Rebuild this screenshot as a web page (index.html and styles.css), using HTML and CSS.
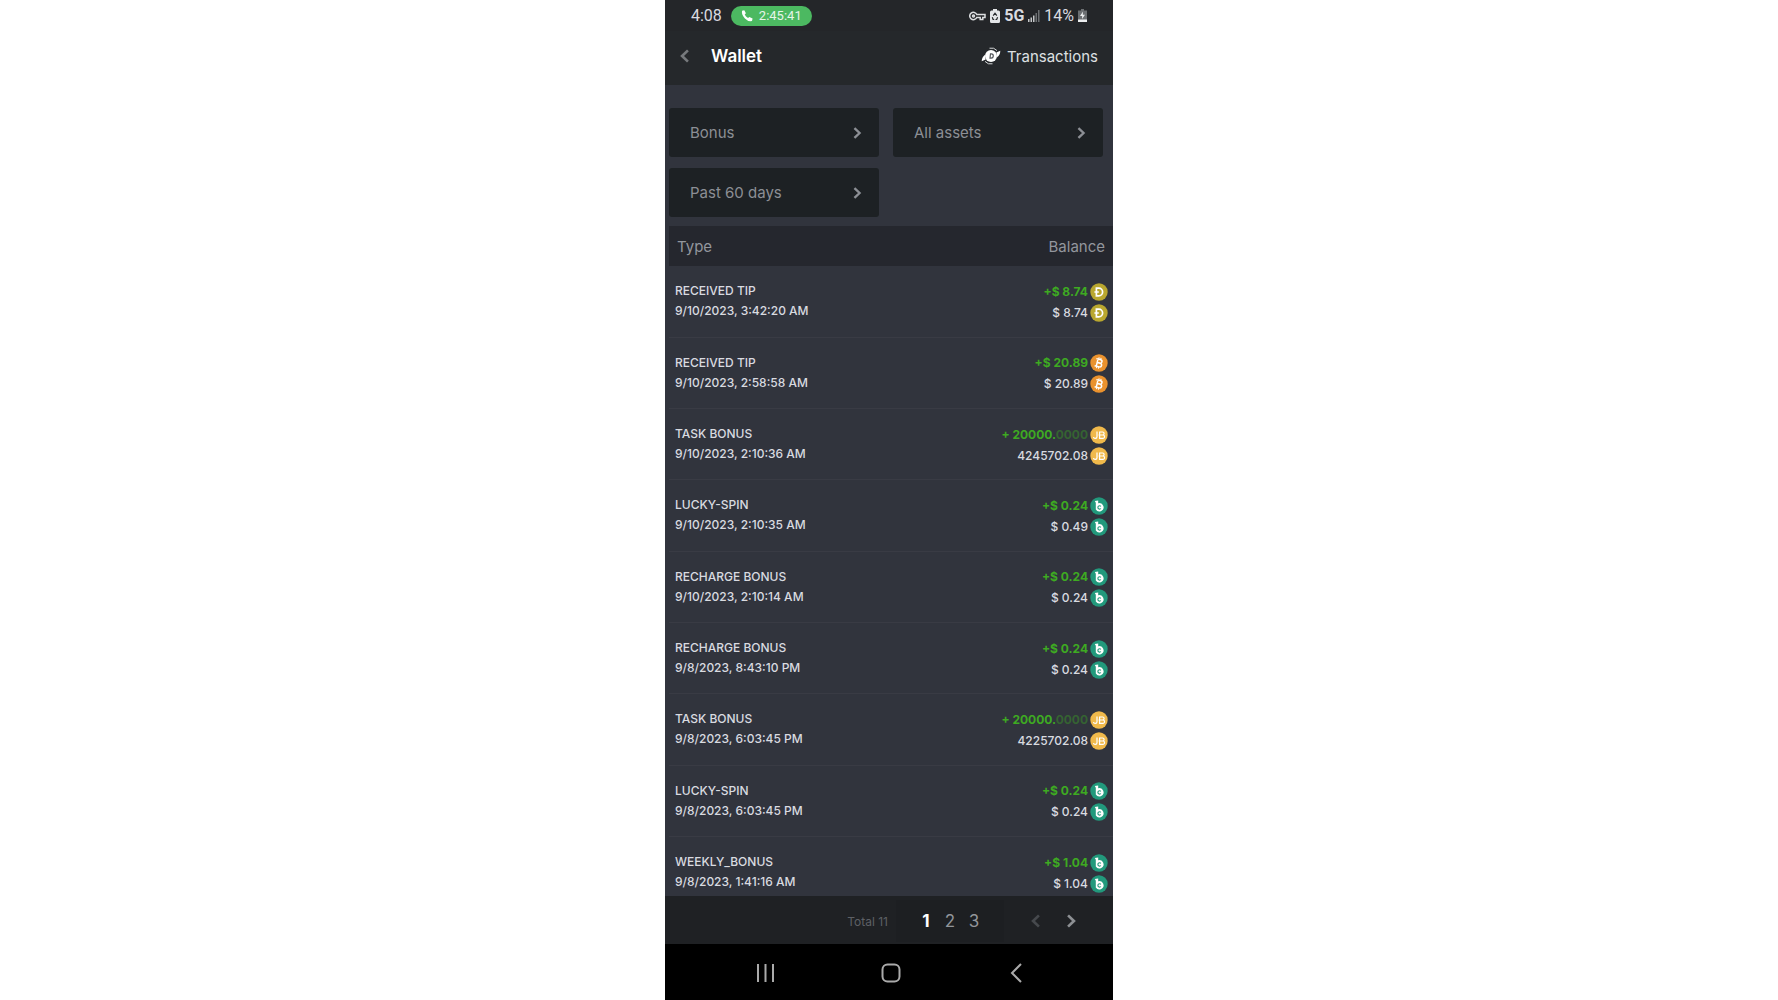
FILE: index.html
```html
<!DOCTYPE html>
<html lang="en">
<head>
  <meta charset="UTF-8">
  <meta name="viewport" content="width=device-width, initial-scale=1.0">
  <title>Wallet</title>
  <link rel="stylesheet" href="styles.css">
</head>
<body>

  <!-- shared icons -->
  <svg class="sprite" aria-hidden="true">
    <symbol id="right" viewBox="0 0 12 12"><path d="M3.8 1.8 8.2 6l-4.4 4.2" fill="none" stroke="currentColor" stroke-width="2"/></symbol>
    <symbol id="left" viewBox="0 0 12 12"><path d="M8.2 1.8 3.8 6l4.4 4.2" fill="none" stroke="currentColor" stroke-width="2"/></symbol>
    <symbol id="doge" viewBox="0 0 18 18">
      <circle cx="9" cy="9" r="8.7" fill="#b9a72f"/>
      <path d="M6.4 5.2h2.4a3.8 3.8 0 0 1 0 7.6H6.4zM4.4 9h4.4" fill="none" stroke="#fff" stroke-width="1.7"/>
    </symbol>
    <symbol id="btc" viewBox="0 0 18 18">
      <circle cx="9" cy="9" r="8.7" fill="#ea922e"/>
      <g transform="rotate(14 9 9)" fill="none" stroke="#fff" stroke-width="1.5">
        <path d="M5.4 5.4h4.4a1.7 1.7 0 0 1 0 3.5H7.2h3a1.9 1.9 0 0 1 0 3.8H5.4M7.1 5.4v7.3"/>
        <path d="M7.8 3.4v2M9.8 3.4v2M7.8 12.7v2M9.8 12.7v2" stroke-width="1.1"/>
      </g>
    </symbol>
    <symbol id="jb" viewBox="0 0 18 18">
      <circle cx="9" cy="9" r="8.7" fill="#f0b94b"/>
      <path d="M7 5.6v5.1q0 1.7-1.7 1.7T3.5 11M9.6 6h3a1.5 1.5 0 0 1 0 3h-3 3.3a1.6 1.6 0 0 1 0 3.3H9.6zM8.6 9h3" fill="none" stroke="#fff" stroke-width="1.2"/>
    </symbol>
    <symbol id="bc" viewBox="0 0 18 18">
      <circle cx="9" cy="9" r="8.7" fill="#22997c"/>
      <path d="M4.8 4 8.2 3.4v2.8a4.2 4.2 0 1 1-2.4 6.300V5.8z" fill="#fff"/>
      <path d="M10.900 9.300a1.700 1.700 0 1 0 0 2.200" fill="none" stroke="#22997c" stroke-width="1.100"/>
    </symbol>
  </svg>

  <div class="phone">

    <div class="status">
      <span class="time">4:08</span>
      <span class="call">
        <svg width="12" height="12" viewBox="0 0 12 12"><path d="M1 .8 3.3.2l1.6 3-1.2 1.3q1 2.1 3.3 3.6l1.4-1.2 3.2 1.6-.6 2.600q-3.600.800-7.100-2.700T1 .8z" fill="#fff"/></svg>
        2:45:41
      </span>
      <span class="signals">
        <svg width="17" height="12" viewBox="0 0 17 12" fill="none" stroke="#dcdee0" stroke-width="1.5">
          <path d="M7.8 4.5a3.7 3.7 0 1 0 0 3h3.4v2h2.6v-2H16v-3z"/><circle cx="4.5" cy="6" r="1"/>
        </svg>
        <svg width="10" height="14" viewBox="0 0 10 14">
          <path d="M3 0h4v1.5h1.5Q10 1.500 10 3v9.500Q10 14 8.500 14h-7Q0 14 0 12.500V3q0-1.500 1.500-1.500H3z" fill="#e4e6e8"/>
          <path d="m3.200 6.700 1.800-2.500 1.800 2.500M7.600 8.200l-.9 2.300H5.500M4.200 10.500H3.100l-.8-2.200" fill="none" stroke="#24272a" stroke-width="1.200"/>
        </svg>
        <b>5G</b>
        <svg width="12" height="12" viewBox="0 0 12 12">
          <path d="M0 9h1.500v3H0zM2.500 7.500H4V12H2.500zM5 5.500h1.500V12H5z" fill="#c4c6c8"/>
          <path d="M7.500 3H9v9H7.500zM10 0h1.500v12H10z" fill="#6d7073"/>
        </svg>
        <span class="percent">14%</span>
        <svg width="9" height="13" viewBox="0 0 9 13">
          <path d="M3 0h3v1.500h3V13H0V1.500h3z" fill="#6c6f72"/>
          <path d="M0 10.500h9V13H0zM5 2.500 2 7h2.200L4 10l3-4.300H4.800z" fill="#eceeef"/>
        </svg>
      </span>
    </div>

    <header class="topbar">
      <button class="back" aria-label="Back"><svg width="16" height="16"><use href="#left"/></svg></button>
      <h1>Wallet</h1>
      <a href="#" class="transactions">
        <svg width="20" height="18" viewBox="0 0 20 18">
          <circle cx="10" cy="9" r="6" fill="#fff"/>
          <path d="M9.5 6.800h.8a2 2 0 0 1-.3 4.300h-1z" fill="none" stroke="#55585c" stroke-width="1.200"/>
          <path d="M8.500 1.200a7.500 7.500 0 0 1 7.500 2.400M11.500 16.800A7.500 7.500 0 0 1 4 14.400" fill="none" stroke="#d5d7d9" stroke-width="1"/>
          <path d="m15.300 5.500 4-1.800q0 4-3.200 6.600 0-2.600-.8-4.800zM4.700 12.500l-4 1.800q0-4 3.200-6.600 0 2.600.8 4.800z" fill="#fff"/>
        </svg>
        Transactions
      </a>
    </header>

    <div class="filters">
      <div class="filter">
        <select aria-label="Type"><option>Bonus</option></select>
        <svg width="14" height="14"><use href="#right"/></svg>
      </div>
      <div class="filter">
        <select aria-label="Asset"><option>All assets</option></select>
        <svg width="14" height="14"><use href="#right"/></svg>
      </div>
      <div class="filter">
        <select aria-label="Period"><option>Past 60 days</option></select>
        <svg width="14" height="14"><use href="#right"/></svg>
      </div>
    </div>

    <main class="list">
      <table>
        <thead>
          <tr><th>Type</th><th>Balance</th></tr>
        </thead>
        <tbody>
          <tr>
            <td>RECEIVED TIP<br>9/10/2023, 3:42:20 AM</td>
            <td>
              <div class="amount plus">+$ 8.74 <svg><use href="#doge"/></svg></div>
              <div class="amount">$ 8.74 <svg><use href="#doge"/></svg></div>
            </td>
          </tr>
          <tr>
            <td>RECEIVED TIP<br>9/10/2023, 2:58:58 AM</td>
            <td>
              <div class="amount plus">+$ 20.89 <svg><use href="#btc"/></svg></div>
              <div class="amount">$ 20.89 <svg><use href="#btc"/></svg></div>
            </td>
          </tr>
          <tr>
            <td>TASK BONUS<br>9/10/2023, 2:10:36 AM</td>
            <td>
              <div class="amount plus"><span>+ 20000.<i>0000</i></span> <svg><use href="#jb"/></svg></div>
              <div class="amount">4245702.08 <svg><use href="#jb"/></svg></div>
            </td>
          </tr>
          <tr>
            <td>LUCKY-SPIN<br>9/10/2023, 2:10:35 AM</td>
            <td>
              <div class="amount plus">+$ 0.24 <svg><use href="#bc"/></svg></div>
              <div class="amount">$ 0.49 <svg><use href="#bc"/></svg></div>
            </td>
          </tr>
          <tr>
            <td>RECHARGE BONUS<br>9/10/2023, 2:10:14 AM</td>
            <td>
              <div class="amount plus">+$ 0.24 <svg><use href="#bc"/></svg></div>
              <div class="amount">$ 0.24 <svg><use href="#bc"/></svg></div>
            </td>
          </tr>
          <tr>
            <td>RECHARGE BONUS<br>9/8/2023, 8:43:10 PM</td>
            <td>
              <div class="amount plus">+$ 0.24 <svg><use href="#bc"/></svg></div>
              <div class="amount">$ 0.24 <svg><use href="#bc"/></svg></div>
            </td>
          </tr>
          <tr>
            <td>TASK BONUS<br>9/8/2023, 6:03:45 PM</td>
            <td>
              <div class="amount plus"><span>+ 20000.<i>0000</i></span> <svg><use href="#jb"/></svg></div>
              <div class="amount">4225702.08 <svg><use href="#jb"/></svg></div>
            </td>
          </tr>
          <tr>
            <td>LUCKY-SPIN<br>9/8/2023, 6:03:45 PM</td>
            <td>
              <div class="amount plus">+$ 0.24 <svg><use href="#bc"/></svg></div>
              <div class="amount">$ 0.24 <svg><use href="#bc"/></svg></div>
            </td>
          </tr>
          <tr>
            <td>WEEKLY_BONUS<br>9/8/2023, 1:41:16 AM</td>
            <td>
              <div class="amount plus">+$ 1.04 <svg><use href="#bc"/></svg></div>
              <div class="amount">$ 1.04 <svg><use href="#bc"/></svg></div>
            </td>
          </tr>
        </tbody>
      </table>
    </main>

    <footer class="pager">
      <span class="total">Total 11</span>
      <div class="pages">
        <button class="current">1</button>
        <button>2</button>
        <button>3</button>
      </div>
      <div class="arrows">
        <button aria-label="Previous page" disabled><svg width="16" height="16"><use href="#left"/></svg></button>
        <button aria-label="Next page"><svg width="16" height="16"><use href="#right"/></svg></button>
      </div>
    </footer>

    <nav class="system">
      <button aria-label="Recent apps"><svg width="20" height="20" viewBox="0 0 20 20"><path d="M2 1v18M9.5 1v18M17 1v18"/></svg></button>
      <button aria-label="Home"><svg width="20" height="20" viewBox="0 0 20 20"><rect x="1.5" y="1.5" width="17" height="17" rx="5"/></svg></button>
      <button aria-label="Back"><svg width="20" height="20" viewBox="0 0 20 20"><path d="m15 1-9 9 9 9"/></svg></button>
    </nav>

  </div>

</body>
</html>
```
FILE: styles.css
```css
* {
  box-sizing: border-box;
}
body {
  margin: 0;
  background-color: #fff;
  font-family: Inter, "Liberation Sans", sans-serif;
  color: #d9dbe0;
}
button, select {
  padding: 0;
  border: 0;
  background: none;
  font: inherit;
  color: inherit;
}
button {
  cursor: pointer;
}
svg {
  display: block;
  flex: none;
}
.sprite {
  position: absolute;
  width: 0;
  height: 0;
}
.phone {
  display: flex;
  flex-direction: column;
  max-width: 448px;
  min-height: 100vh;
  margin: 0 auto;
  background-color: #31343d;
}

/* status bar */
.status {
  display: flex;
  align-items: center;
  gap: 9px;
  height: 31px;
  padding: 0 26px;
  background-color: #242629;
  font-family: Roboto, sans-serif;
  font-size: 16px;
}
.call {
  display: flex;
  align-items: center;
  gap: 6px;
  height: 20px;
  padding: 0 10px;
  border-radius: 10px;
  background-color: #4cb961;
  color: #e6f5e8;
  font-size: 13px;
}
.signals {
  display: flex;
  align-items: center;
  gap: 4px;
  margin-left: auto;
}

/* title bar */
.topbar {
  display: flex;
  align-items: center;
  height: 54px;
  padding: 0 15px 4px 12px;
  background-color: #25282b;
}
.back {
  color: #76797c;
}
h1 {
  margin: 0 auto 0 18px;
  font-size: 17px;
  font-weight: 600;
  color: #fff;
}
.transactions {
  display: flex;
  align-items: center;
  gap: 6px;
  font-size: 15px;
  color: #dee0e2;
  text-decoration: none;
}

/* filters */
.filters {
  display: grid;
  grid-template-columns: 1fr 1fr;
  gap: 11px 14px;
  padding: 23px 10px 9px 4px;
}
.filter {
  display: grid;
  align-items: center;
  height: 49px;
  border-radius: 3px;
  background-color: #1d2124;
  color: #8c8f95;
}
.filter select, .filter svg {
  grid-area: 1 / 1;
}
.filter select {
  height: 100%;
  padding: 0 40px 0 21px;
  appearance: none;
  font-size: 15px;
}
.filter svg {
  justify-self: end;
  margin-right: 15px;
  pointer-events: none;
}

/* transaction list */
.list {
  display: grid;
  flex: 1;
  padding-left: 4px;
}
table {
  width: 100%;
  height: 100%;
  border-collapse: collapse;
}
th {
  height: 40px;
  padding: 0 8px;
  background-color: #25272e;
  color: #93969d;
  font-size: 15px;
  font-weight: 400;
  text-align: left;
}
th:last-child {
  text-align: right;
}
td {
  height: 71px;
  padding: 15px 5px 0 6px;
  border-bottom: 1px solid #393b44;
  font-size: 12px;
  font-weight: 500;
  line-height: 20px;
  vertical-align: top;
}
tr:last-child td {
  height: 59px;
  border: 0;
}
.amount {
  display: flex;
  align-items: center;
  justify-content: flex-end;
  gap: 2px;
  height: 21px;
}
.amount svg {
  width: 18px;
  height: 18px;
}
.plus {
  color: #3eaa22;
  font-weight: 700;
}
.plus i {
  color: #356332;
  font-style: normal;
}

/* paging */
.pager {
  display: flex;
  align-items: center;
  justify-content: flex-end;
  height: 48px;
  padding: 2px 25px 0 0;
  background-color: #1f2124;
}
.total {
  margin-right: 8px;
  color: #5d6065;
  font-size: 12px;
}
.pages {
  display: flex;
  justify-content: center;
  width: 108px;
  height: 42px;
  background-color: #1d1f22;
  color: #92959a;
  font-size: 17px;
}
.pages button {
  width: 24px;
}
.pages .current {
  color: #fff;
  font-weight: 700;
}
.arrows {
  display: flex;
  margin-left: 14px;
  color: #8d9094;
}
.arrows button {
  display: grid;
  place-items: center;
  width: 35px;
  height: 42px;
}
.arrows button:disabled {
  color: #46494d;
}

/* android navigation */
.system {
  display: flex;
  height: 56px;
  padding: 2px 34px 0 38px;
  background-color: #000;
}
.system button {
  display: grid;
  flex: 1;
  place-items: center;
}
.system svg {
  fill: none;
  stroke: #aaa;
  stroke-width: 2;
}
```
